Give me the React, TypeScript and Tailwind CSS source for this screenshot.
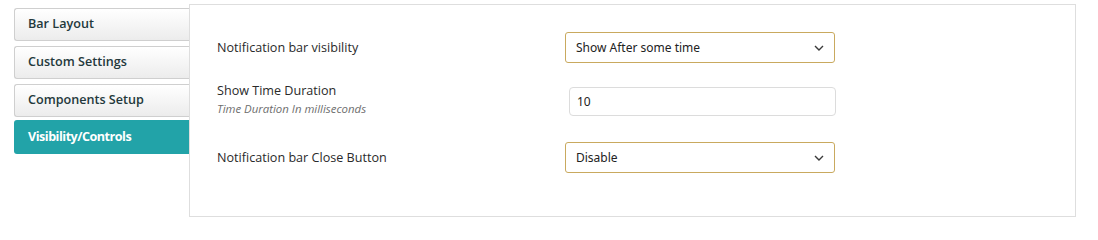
import React from 'react';

const tabs = ['Bar Layout', 'Custom Settings', 'Components Setup', 'Visibility/Controls'];

const Chevron = () => (
  <svg width="10" height="6" viewBox="0 0 10 6" fill="none">
    <path d="M1 1l4 4 4-4" stroke="#3a3a3a" strokeWidth="1.4" />
  </svg>
);

const SelectBox = ({ value }: { value: string }) => (
  <div className="flex h-[31px] w-[270px] items-center justify-between rounded-[3px] border border-[#c9a95e] bg-white pl-[10px] pr-[10px] font-['Noto_Sans',sans-serif] text-[12px] text-[#222]">
    <span>{value}</span>
    <Chevron />
  </div>
);

export default function App() {
  return (
    <div className="flex h-[238px] w-[1098px] bg-white font-['Open_Sans',sans-serif]">
      {/* Sidebar tabs */}
      <div className="flex w-[189px] shrink-0 flex-col gap-[5px] pl-[14px] pt-[8px]">
        {tabs.map((t, i) =>
          i === 3 ? (
            <div
              key={t}
              className="-mt-[2px] flex h-[34px] items-center rounded-l-[3px] bg-[#22a3a8] pl-[14px] text-[12.6px] font-bold tracking-[-0.5px] text-white"
            >
              {t}
            </div>
          ) : (
            <div
              key={t}
              className="flex h-[33px] items-center rounded-l-[3px] border border-r-0 border-[#cfcfcf] bg-gradient-to-b from-white to-[#ececec] pl-[13px] text-[12.6px] font-semibold text-[#24393c]"
            >
              {t}
            </div>
          )
        )}
      </div>

      {/* Content panel */}
      <div className="mt-[4px] h-[213px] w-[887px] shrink-0 border border-[#dedede] bg-white pl-[27px] pt-[27px] text-[12.6px] text-[#2a2a2a]">
        <div className="flex h-[31px] items-center">
          <div className="w-[348px] pt-[1px]">Notification bar visibility</div>
          <SelectBox value="Show After some time" />
        </div>

        <div className="mt-[18px] flex items-start">
          <div className="w-[348px] pt-[1px]">
            <div className="leading-[18px]">Show Time Duration</div>
            <div className="mt-[1px] text-[11.4px] italic leading-[16px] text-[#6e6e6e]">Time Duration In milliseconds</div>
          </div>
          <div className="ml-[4px] mt-[6px] flex h-[29px] w-[267px] items-center rounded-[4px] border border-[#dcdcdc] pl-[7px] font-['Noto_Sans',sans-serif] text-[12px] text-[#222]">
            10
          </div>
        </div>

        <div className="mt-[25px] flex h-[31px] items-center">
          <div className="w-[348px] pt-[1px]">Notification bar Close Button</div>
          <SelectBox value="Disable" />
        </div>
      </div>
    </div>
  );
}
